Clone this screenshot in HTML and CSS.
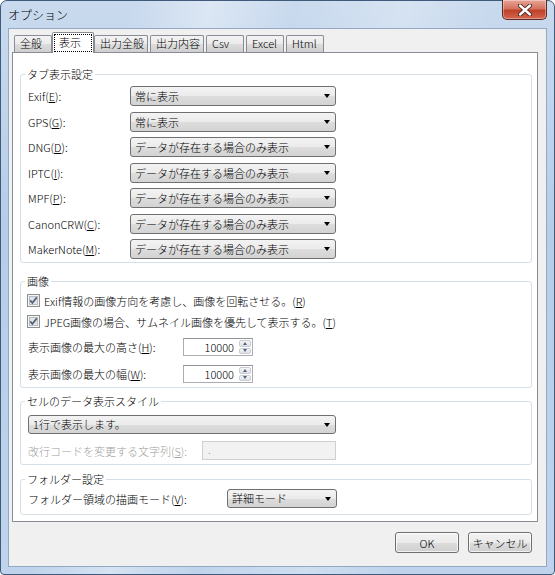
FILE: index.html
```html
<!DOCTYPE html>
<html lang="ja">
<head>
    <meta charset="UTF-8">
    <title>オプション</title>
    <link rel="stylesheet" href="styles.css">
</head>
<body>
    <div class="window">
        <div class="titlebar">
            <span class="title">オプション</span>
            <button class="close" aria-label="閉じる">
                <svg width="14" height="12" viewBox="0 0 14 12">
                    <path d="M2 1.5 L12 10.5 M12 1.5 L2 10.5" stroke="#4a1e18" stroke-width="4.2" stroke-linecap="round"/>
                    <path d="M2 1.5 L12 10.5 M12 1.5 L2 10.5" stroke="#ffffff" stroke-width="2.4" stroke-linecap="round"/>
                </svg>
            </button>
        </div>

        <div class="client">
            <div class="tabs">
                <div class="tab">全般</div>
                <div class="tab active"><span class="focus">表示</span></div>
                <div class="tab">出力全般</div>
                <div class="tab">出力内容</div>
                <div class="tab">Csv</div>
                <div class="tab">Excel</div>
                <div class="tab">Html</div>
            </div>

            <div class="panel">
                <fieldset class="group group-tabs">
                    <legend>タブ表示設定</legend>
                    <div class="tab-rows">
                        <label>Exif(<u>E</u>):</label>
                        <div class="combo">常に表示<i class="arrow"></i></div>
                        <label>GPS(<u>G</u>):</label>
                        <div class="combo">常に表示<i class="arrow"></i></div>
                        <label>DNG(<u>D</u>):</label>
                        <div class="combo">データが存在する場合のみ表示<i class="arrow"></i></div>
                        <label>IPTC(<u>I</u>):</label>
                        <div class="combo">データが存在する場合のみ表示<i class="arrow"></i></div>
                        <label>MPF(<u>P</u>):</label>
                        <div class="combo">データが存在する場合のみ表示<i class="arrow"></i></div>
                        <label>CanonCRW(<u>C</u>):</label>
                        <div class="combo">データが存在する場合のみ表示<i class="arrow"></i></div>
                        <label>MakerNote(<u>M</u>):</label>
                        <div class="combo">データが存在する場合のみ表示<i class="arrow"></i></div>
                    </div>
                </fieldset>

                <fieldset class="group group-image">
                    <legend>画像</legend>
                    <div class="check-row">
                        <svg class="checkbox" width="13" height="13" viewBox="0 0 13 13">
                            <rect x="0.5" y="0.5" width="12" height="12" fill="#f4f4f4" stroke="#8e8f8f"/>
                            <rect x="2.5" y="2.5" width="8" height="8" fill="#e2e4e7" stroke="#b7bcc2"/>
                            <path d="M3.2 6.4 L5.4 8.8 L9.8 3.4" fill="none" stroke="#56657a" stroke-width="1.8"/>
                        </svg>
                        <span>Exif情報の画像方向を考慮し、画像を回転させる。(<u>R</u>)</span>
                    </div>
                    <div class="check-row">
                        <svg class="checkbox" width="13" height="13" viewBox="0 0 13 13">
                            <rect x="0.5" y="0.5" width="12" height="12" fill="#f4f4f4" stroke="#8e8f8f"/>
                            <rect x="2.5" y="2.5" width="8" height="8" fill="#e2e4e7" stroke="#b7bcc2"/>
                            <path d="M3.2 6.4 L5.4 8.8 L9.8 3.4" fill="none" stroke="#56657a" stroke-width="1.8"/>
                        </svg>
                        <span>JPEG画像の場合、サムネイル画像を優先して表示する。(<u>T</u>)</span>
                    </div>
                    <div class="spin-rows">
                        <label>表示画像の最大の高さ(<u>H</u>):</label>
                        <div class="spin">
                            <span class="spin-value">10000</span>
                            <span class="spin-buttons"><i class="up"></i><i class="down"></i></span>
                        </div>
                        <label>表示画像の最大の幅(<u>W</u>):</label>
                        <div class="spin">
                            <span class="spin-value">10000</span>
                            <span class="spin-buttons"><i class="up"></i><i class="down"></i></span>
                        </div>
                    </div>
                </fieldset>

                <fieldset class="group group-cell">
                    <legend>セルのデータ表示スタイル</legend>
                    <div class="combo combo-wide">1行で表示します。<i class="arrow"></i></div>
                    <div class="disabled-row">
                        <label class="disabled">改行コードを変更する文字列(<u>S</u>):</label>
                        <div class="textbox disabled">.</div>
                    </div>
                </fieldset>

                <fieldset class="group group-folder">
                    <legend>フォルダー設定</legend>
                    <div class="folder-row">
                        <label>フォルダー領域の描画モード(<u>V</u>):</label>
                        <div class="combo combo-small">詳細モード<i class="arrow"></i></div>
                    </div>
                </fieldset>
            </div>

            <div class="buttons">
                <button class="btn">OK</button>
                <button class="btn">キャンセル</button>
            </div>
        </div>
    </div>
</body>
</html>
```

FILE: styles.css
```css
body {
    margin: 0;
    font-family: "Noto Sans CJK JP", "Noto Sans", sans-serif;
    font-size: 11px;
    font-weight: 300;
    color: #000;
}
u {
    text-decoration: underline;
    text-underline-offset: 1px;
}

/* window frame */
.window {
    width: 555px;
    height: 575px;
    box-sizing: border-box;
    display: flex;
    flex-direction: column;
    padding: 0 7px 7px;
    border: 1px solid #3f5a7a;
    border-radius: 7px 7px 4px 4px;
    background:
        linear-gradient(100deg, rgba(255,255,255,0) 20%, rgba(255,255,255,0.35) 32%, rgba(255,255,255,0) 45%, rgba(255,255,255,0.25) 62%, rgba(255,255,255,0) 75%),
        linear-gradient(to bottom, #c9daee 0%, #b6cde8 40%, #bfd4ec 100%);
}
.titlebar {
    height: 28px;
    display: flex;
    justify-content: space-between;
    align-items: flex-start;
}
.title {
    margin-top: 6px;
    font-size: 12px;
    line-height: 16px;
}
.close {
    width: 45px;
    height: 20px;
    margin: -1px 0 0;
    padding: 0;
    display: flex;
    align-items: center;
    justify-content: center;
    border: 1px solid #5b2a24;
    border-top: none;
    border-radius: 0 0 5px 5px;
    background: linear-gradient(to bottom, #e6a597 0%, #d6735f 45%, #c0412a 55%, #d2674f 100%);
    box-shadow: inset 0 0 0 1px rgba(255,255,255,0.35);
}

.client {
    flex: 1;
    display: flex;
    flex-direction: column;
    padding: 3px 8px 0 3px;
    background: #f0f0f0;
    border: 1px solid #93a8c2;
}

/* tabs */
.tabs {
    display: flex;
    align-items: flex-end;
    gap: 2px;
    height: 21px;
    padding-left: 2px;
    margin-bottom: -1px;
}
.tab {
    box-sizing: border-box;
    min-width: 38px;
    height: 17px;
    margin-bottom: 1px;
    padding: 0 3px 0 5px;
    line-height: 15px;
    border: 1px solid #898c95;
    border-bottom: none;
    border-radius: 2px 2px 0 0;
    background: linear-gradient(to bottom, #f3f3f3 0%, #ebebeb 50%, #dddddd 51%, #cfcfcf 100%);
}
.tab.active {
    position: relative;
    z-index: 1;
    min-width: 42px;
    height: 21px;
    margin: 0 -2px;
    padding: 1px 1px 0;
    background: #fff;
}
.focus {
    display: block;
    height: 18px;
    padding-left: 5px;
    line-height: 16px;
    outline: 1px dotted #000;
    outline-offset: -1px;
}

.panel {
    flex: 1;
    padding: 14px 5px 6px 7px;
    background: #fff;
    border: 1px solid #898c95;
}

/* group boxes */
.group {
    margin: 0;
    padding: 0 7px;
    border: 1px solid #d5dfe5;
    border-radius: 3px;
}
.group legend {
    margin-left: -3px;
    padding: 0 2px;
    line-height: 14px;
}
.group-tabs { padding-top: 5px; padding-bottom: 3px; }
.group-image { margin-top: 11px; padding-top: 2px; padding-bottom: 4px; }
.group-cell { margin-top: 6px; padding-top: 7px; padding-bottom: 4px; }
.group-folder { margin-top: 7px; padding-top: 3px; padding-bottom: 6px; }

.tab-rows {
    display: grid;
    grid-template-columns: 102px 206px;
    row-gap: 5.5px;
    align-items: center;
}
.spin-rows {
    display: grid;
    grid-template-columns: 155px 70px;
    row-gap: 9px;
    align-items: center;
    margin-top: 6px;
}

/* dropdown */
.combo {
    position: relative;
    box-sizing: border-box;
    height: 20px;
    padding-left: 4px;
    line-height: 18px;
    border: 1px solid #707070;
    border-radius: 3px;
    background: linear-gradient(to bottom, #f3f3f3 0%, #ebebeb 50%, #dddddd 51%, #d3d3d3 100%);
}
.arrow {
    position: absolute;
    right: 5px;
    top: 7px;
    border-left: 3.5px solid transparent;
    border-right: 3.5px solid transparent;
    border-top: 4px solid #000;
}
.combo-wide { width: 308px; height: 19px; line-height: 17px; }
.combo-small { width: 110px; height: 19px; line-height: 17px; }

/* checkboxes */
.check-row {
    display: flex;
    align-items: center;
    gap: 4px;
    height: 21px;
    margin-left: -1px;
}

/* spin box */
.spin {
    box-sizing: border-box;
    height: 18px;
    display: flex;
    align-items: center;
    justify-content: flex-end;
    padding: 1px;
    border: 1px solid #abadb3;
    border-top-color: #8f949b;
}
.spin-value {
    margin-right: 5px;
}
.spin-buttons {
    display: flex;
    flex-direction: column;
    width: 12px;
    height: 14px;
    gap: 1px;
}
.spin-buttons i {
    flex: 1;
    display: flex;
    align-items: center;
    justify-content: center;
    border: 1px solid #c9cdd2;
    border-radius: 2px;
    background: linear-gradient(to bottom, #f6f6f6, #dfe1e4);
}
.spin-buttons i::after {
    content: "";
    border-left: 2.5px solid transparent;
    border-right: 2.5px solid transparent;
}
.spin-buttons .up::after { border-bottom: 3px solid #4d6185; }
.spin-buttons .down::after { border-top: 3px solid #4d6185; }

/* disabled text field */
.disabled-row {
    display: grid;
    grid-template-columns: 174px 134px;
    align-items: center;
    margin-top: 7px;
}
.disabled { color: #a0a0a0; }
.textbox {
    box-sizing: border-box;
    height: 19px;
    padding-left: 5px;
    line-height: 15px;
    border: 1px solid #cfcfcf;
    background: #f2f2f2;
}

.folder-row {
    display: grid;
    grid-template-columns: 199px 110px;
    align-items: center;
}

/* dialog buttons */
.buttons {
    display: flex;
    justify-content: flex-end;
    gap: 9px;
    padding: 10px 6px 13px 0;
}
.btn {
    width: 64px;
    height: 21px;
    padding: 0;
    font: inherit;
    border: 1px solid #707070;
    border-radius: 3px;
    background: linear-gradient(to bottom, #f3f3f3 0%, #ebebeb 50%, #dddddd 51%, #cfcfcf 100%);
    box-shadow: inset 0 0 0 1px rgba(255,255,255,0.7);
}
```
